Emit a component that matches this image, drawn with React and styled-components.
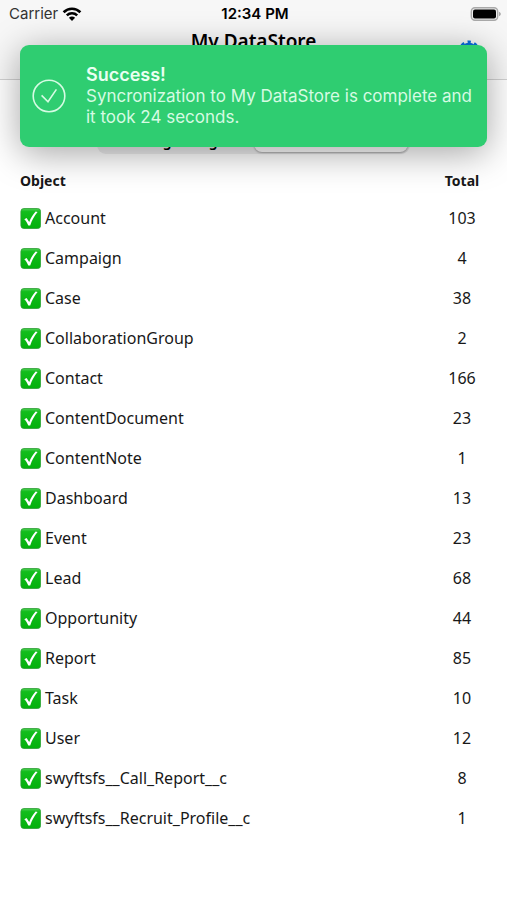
import React, { useState } from "react";
import styled, { createGlobalStyle } from "styled-components";

const objects = [
  { name: "Account", total: 103 },
  { name: "Campaign", total: 4 },
  { name: "Case", total: 38 },
  { name: "CollaborationGroup", total: 2 },
  { name: "Contact", total: 166 },
  { name: "ContentDocument", total: 23 },
  { name: "ContentNote", total: 1 },
  { name: "Dashboard", total: 13 },
  { name: "Event", total: 23 },
  { name: "Lead", total: 68 },
  { name: "Opportunity", total: 44 },
  { name: "Report", total: 85 },
  { name: "Task", total: 10 },
  { name: "User", total: 12 },
  { name: "swyftsfs__Call_Report__c", total: 8 },
  { name: "swyftsfs__Recruit_Profile__c", total: 1 },
];

const WifiIcon = () => (
  <svg width="20" height="14" viewBox="0 0 20 14" fill="none" stroke="#000" strokeWidth="2.6">
    <path d="M1.6 5.2C6.4 0.5 13.6 0.5 18.4 5.2" />
    <path d="M4.8 8.4C7.8 5.6 12.2 5.6 15.2 8.4" />
    <path d="M10 14L6.9 10.8C8.7 9.2 11.3 9.2 13.1 10.8Z" fill="#000" stroke="none" />
  </svg>
);

const BatteryIcon = () => (
  <svg width="31" height="14" viewBox="0 0 31 14">
    <rect x="1.3" y="0.8" width="26.4" height="12.4" rx="3.6" fill="#eee" stroke="#a9a9a9" strokeWidth="1.4" />
    <rect x="3" y="2.4" width="23" height="9.2" rx="2" fill="#000" />
    <path d="M29 4.8C31.4 5.6 31.4 8.4 29 9.2Z" fill="#a9a9a9" />
  </svg>
);

const GearIcon = () => (
  <svg width="22" height="22" viewBox="0 0 22 22" fill="none" stroke="#0b6fdc">
    <circle cx="11" cy="11" r="7" strokeWidth="2.4" />
    <circle cx="11" cy="11" r="9" strokeWidth="3" strokeDasharray="3.6 3.47" strokeDashoffset="1.8" transform="rotate(-90 11 11)" />
    <circle cx="11" cy="11" r="2" strokeWidth="2" />
  </svg>
);

const SuccessIcon = () => (
  <svg width="34" height="34" viewBox="0 0 34 34" fill="none" stroke="#d6fbe3" strokeWidth="1.6">
    <circle cx="17" cy="17" r="15.8" />
    <path d="M9.6 16.4L16 22.8L24.4 10.4" />
  </svg>
);

const CheckIcon = () => (
  <svg width="21" height="21" viewBox="0 0 21 21">
    <defs>
      <linearGradient id="checkFill" x1="0" y1="0" x2="0" y2="1">
        <stop offset="0" stopColor="#4fce55" />
        <stop offset="0.16" stopColor="#12bd1c" />
        <stop offset="1" stopColor="#04b00c" />
      </linearGradient>
    </defs>
    <rect x="0.9" y="0.5" width="19.7" height="20" rx="3" fill="url(#checkFill)" stroke="#2c9e33" strokeWidth="0.8" />
    <path d="M4.3 11.2L6.6 10L9.2 13.9C10.8 9.9 12.8 6.6 15.6 3.4L17.6 4C14.2 8 12.1 12 10.2 17.4H8.3C7.2 15 6 12.9 4.3 11.2Z" fill="#fff" />
  </svg>
);

export default function App() {
  const [tab, setTab] = useState("data");

  return (
    <>
      <GlobalStyle />
      <Screen>
        <TopBar>
          <StatusBar>
            <Carrier>
              Carrier
              <WifiIcon />
            </Carrier>
            <Clock>12:34 PM</Clock>
            <Battery>
              <BatteryIcon />
            </Battery>
          </StatusBar>
          <NavBar>
            <Title>My DataStore</Title>
            <SettingsButton aria-label="Settings">
              <GearIcon />
            </SettingsButton>
          </NavBar>
        </TopBar>

        <Content>
          <Segments>
            <Segment $active={tab === "storage"} onClick={() => setTab("storage")}>
              Storage Usage
            </Segment>
            <Segment $active={tab === "data"} onClick={() => setTab("data")}>
              Data
            </Segment>
          </Segments>

          <Table>
            <thead>
              <tr>
                <HeadCell scope="col">Object</HeadCell>
                <HeadCell scope="col" $total>Total</HeadCell>
              </tr>
            </thead>
            <tbody>
              {objects.map(({ name, total }) => (
                <tr key={name}>
                  <Cell>
                    <ObjectName>
                      <CheckIcon />
                      {name}
                    </ObjectName>
                  </Cell>
                  <Cell $total>{total}</Cell>
                </tr>
              ))}
            </tbody>
          </Table>
        </Content>

        <Toast role="status">
          <SuccessIcon />
          <div>
            <ToastTitle>Success!</ToastTitle>
            <ToastText>
              Syncronization to My DataStore is complete and it took 24 seconds.
            </ToastText>
          </div>
        </Toast>
      </Screen>
    </>
  );
}

const GlobalStyle = createGlobalStyle`
  * {
    box-sizing: border-box;
  }
  body {
    margin: 0;
    background: #fff;
    color: #181818;
    font-family: "Noto Sans", "Open Sans", sans-serif;
  }
  svg {
    display: block;
    flex-shrink: 0;
  }
`;

const Screen = styled.div`
  position: relative;
  min-height: 100vh;
  overflow: hidden;
`;

const TopBar = styled.header`
  background: #f7f7f7;
  border-bottom: 1px solid #d2d2d2;
`;

const StatusBar = styled.div`
  display: grid;
  grid-template-columns: 1fr auto 1fr;
  align-items: center;
  height: 27px;
  padding: 0 6px 0 9px;
  font-family: Inter, sans-serif;
  font-size: 15px;
  color: #000;
`;

const Carrier = styled.span`
  display: flex;
  align-items: center;
  gap: 4px;
  color: #333;
`;

const Clock = styled.span`
  font-weight: 600;
`;

const Battery = styled.span`
  justify-self: end;
`;

const NavBar = styled.div`
  display: grid;
  grid-template-columns: 1fr auto 1fr;
  align-items: start;
  height: 52px;
  padding: 0 27px;
`;

const Title = styled.h1`
  grid-column: 2;
  margin: 0;
  font-size: 19px;
  line-height: 28px;
  font-weight: 600;
  color: #000;
`;

const SettingsButton = styled.button`
  justify-self: end;
  margin-top: 13px;
  padding: 0;
  border: 0;
  background: none;
`;

const Content = styled.main`
  padding: 34px 20px 0;
`;

const Segments = styled.div`
  display: flex;
  width: 67%;
  height: 40px;
  margin: 0 auto;
  padding: 2px;
  border-radius: 9px;
  background: #eeeeef;
`;

const Segment = styled.button`
  flex: 1;
  padding: 14px 0 0;
  border: 0;
  border-radius: 8px;
  background: ${({ $active }) => ($active ? "#fff" : "none")};
  box-shadow: ${({ $active }) => ($active ? "0 1px 2px rgba(0, 0, 0, 0.3)" : "none")};
  font-family: inherit;
  font-size: 14px;
  font-weight: 600;
  color: #000;
`;

const Table = styled.table`
  width: 100%;
  margin-top: 8px;
  border-collapse: collapse;
`;

const HeadCell = styled.th`
  height: 36px;
  width: ${({ $total }) => ($total ? "50px" : "auto")};
  padding: 0;
  font-size: 14px;
  font-weight: 700;
  text-align: ${({ $total }) => ($total ? "center" : "left")};
  white-space: nowrap;
`;

const Cell = styled.td`
  height: 40px;
  padding: 0;
  font-size: 16px;
  line-height: 22px;
  text-align: ${({ $total }) => ($total ? "center" : "left")};
`;

const ObjectName = styled.span`
  display: flex;
  align-items: center;
  gap: 4px;
`;

const Toast = styled.div`
  position: absolute;
  top: 45px;
  left: 20px;
  right: 20px;
  display: flex;
  align-items: center;
  gap: 20px;
  min-height: 102px;
  padding: 18px 12px;
  border-radius: 9px;
  background: #2fcd71;
  box-shadow: 0 6px 36px rgba(0, 0, 0, 0.36);
  font-family: Inter, sans-serif;
`;

const ToastTitle = styled.h2`
  margin: 0;
  font-size: 18px;
  line-height: 22px;
  font-weight: 600;
  color: #e9fff1;
`;

const ToastText = styled.p`
  margin: 0;
  font-size: 17px;
  line-height: 21px;
  color: #d6fbe3;
`;
